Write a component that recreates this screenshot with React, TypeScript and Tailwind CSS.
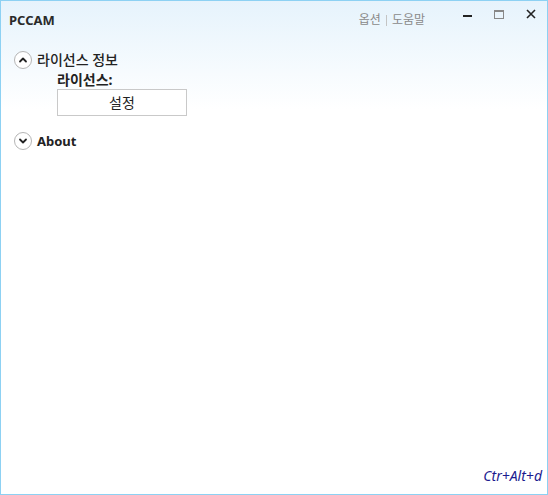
import React from "react";

const font = { fontFamily: '"Noto Sans", "Noto Sans CJK KR", sans-serif' };

function Chevron({ up }: { up: boolean }) {
  return (
    <span className="flex h-[18px] w-[18px] items-center justify-center rounded-full border border-[#b5b5b5] bg-white">
      <svg width="10" height="10" viewBox="0 0 10 10" fill="none">
        <path
          d={up ? "M2 6.5 L5 3.5 L8 6.5" : "M2 3.5 L5 6.5 L8 3.5"}
          stroke="#222"
          strokeWidth="1.8"
          strokeLinecap="round"
          strokeLinejoin="round"
        />
      </svg>
    </span>
  );
}

export default function App() {
  return (
    <div
      className="flex h-[495px] w-[548px] flex-col border border-[#8dd1f3] bg-gradient-to-b from-[#e6f3fc] to-white to-[22%] text-[#222]"
      style={font}
    >
      {/* title bar */}
      <div className="flex h-[40px] items-start">
        <div className="pl-[8px] pt-[10px] text-[13px] font-bold text-[#2a2a2a]">PCCAM</div>
        <div className="ml-auto flex items-center pt-[10px] text-[12px] text-[#8a8a8a]">
          <span>옵션</span>
          <span className="mx-[5px] h-[11px] w-px bg-[#c4c4c4]" />
          <span>도움말</span>
        </div>
        <div className="ml-[26px] flex items-start">
          <div className="flex h-[28px] w-[32px] items-center justify-center">
            <span className="mt-[2px] h-[2px] w-[9px] bg-[#222]" />
          </div>
          <div className="flex h-[26px] w-[32px] items-center justify-center">
            <span className="h-[9px] w-[10px] border border-[#888] border-t-2" />
          </div>
          <div className="flex h-[26px] w-[32px] items-center justify-center">
            <svg width="10" height="10" viewBox="0 0 10 10">
              <path d="M1 1 L9 9 M9 1 L1 9" stroke="#222" strokeWidth="1.6" />
            </svg>
          </div>
        </div>
      </div>

      {/* content */}
      <div className="flex flex-1 flex-col pl-[13px] pt-[9px]">
        <div className="flex h-[20px] items-center gap-[5px]">
          <Chevron up />
          <span className="text-[14px] font-medium leading-[20px]">라이선스 정보</span>
        </div>
        <div className="flex flex-col pl-[43px]">
          <span className="text-[14px] font-bold leading-[19px]">라이선스:</span>
          <button className="flex h-[27px] w-[130px] items-center justify-center border border-[#c9c9c9] bg-white text-[14px] text-[#222]">
            설정
          </button>
        </div>
        <div className="mt-[16px] flex h-[18px] items-center gap-[5px]">
          <Chevron up={false} />
          <span className="text-[13px] font-bold leading-[18px]">About</span>
        </div>
        <div className="mt-auto flex justify-end pb-[8px] pr-[5px]">
          <span className="text-[14px] italic text-[#1b1b8f]">Ctr+Alt+d</span>
        </div>
      </div>
    </div>
  );
}
